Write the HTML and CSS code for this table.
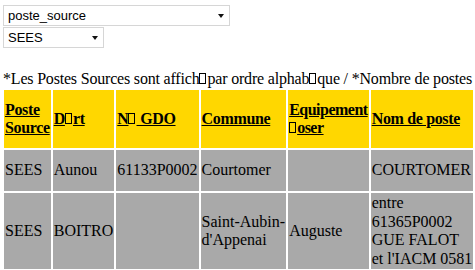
FILE: index.html
```html
<!DOCTYPE html>
<html>
<head>
<meta charset="utf-8">
<link rel="stylesheet" href="styles.css">
</head>
<body>
<div class="filters">
  <span class="sel sel-wide"><select><option>poste_source</option></select><span class="arrow"></span></span>
  <span class="sel sel-small"><select><option>SEES</option></select><span class="arrow"></span></span>
</div>
<p class="note">*Les Postes Sources sont affich<span class="tofu"></span>par ordre alphab<span class="tofu"></span>que / *Nombre de postes : 2</p>
<table class="grid">
  <thead>
    <tr>
      <th><a href="#">Poste Source</a></th>
      <th><a href="#">D<span class="tofu"></span>rt</a></th>
      <th><a href="#">N<span class="tofu"></span> GDO</a></th>
      <th><a href="#">Commune</a></th>
      <th class="tight"><a href="#">Equipement <span class="tofu"></span>oser</a></th>
      <th><a href="#">Nom de poste</a></th>
      <th><a href="#">Nature</a></th>
    </tr>
  </thead>
  <tbody>
    <tr class="r1">
      <td>SEES</td>
      <td>Aunou</td>
      <td>61133P0002</td>
      <td>Courtomer</td>
      <td></td>
      <td>COURTOMER</td>
      <td>Non</td>
    </tr>
    <tr>
      <td>SEES</td>
      <td>BOITRO</td>
      <td></td>
      <td><span class="nw">Saint-Aubin-</span>d'Appenai</td>
      <td>Auguste</td>
      <td>entre 61365P0002 GUE FALOT <span class="nw">et l'IACM 0581</span></td>
      <td>Non</td>
    </tr>
  </tbody>
</table>
</body>
</html>
```

FILE: styles.css
```css
html, body {
  background: #fff;
}
body {
  margin: 5px 0 0 3px;
  font-family: "Liberation Serif", "Times New Roman", serif;
  font-size: 16px;
  color: #000;
}
.filters {
  display: flex;
  flex-direction: column;
  align-items: flex-start;
}
.sel {
  position: relative;
  display: block;
  height: 21px;
}
.sel select {
  appearance: none;
  -webkit-appearance: none;
  display: block;
  height: 21px;
  margin: 0;
  padding: 0 0 0 4px;
  border: 1px solid #d6d6d6;
  border-radius: 0;
  background: #fff;
  font-family: "Liberation Sans", Arial, sans-serif;
  font-size: 13px;
  color: #000;
}
.sel-wide select { width: 227px; }
.sel-small select { width: 101px; }
.sel-small { margin-top: 1px; }
.arrow {
  position: absolute;
  top: 9px;
  right: 6px;
  width: 0;
  height: 0;
  border-left: 3px solid transparent;
  border-right: 3px solid transparent;
  border-top: 4px solid #111;
}
.note {
  margin: 22px 0 0 0;
  white-space: nowrap;
  line-height: 18px;
  letter-spacing: -0.19px;
}
.tofu {
  display: inline-block;
  width: 7px;
  height: 11px;
  border: 1px solid currentColor;
  box-sizing: border-box;
  margin: 0 1px 0 0;
  vertical-align: baseline;
}
.nw {
  white-space: nowrap;
}
.grid {
  width: 1px;
  border-collapse: separate;
  border-spacing: 2px;
  margin-left: -1px;
}
.grid th, .grid td {
  padding: 1px;
  vertical-align: middle;
  text-align: left;
  line-height: 18.5px;
}
.grid th {
  background: #ffd700;
  height: 56px;
  font-weight: bold;
  letter-spacing: -0.35px;
}
.grid th.tight {
  letter-spacing: -0.5px;
}
.grid th a {
  color: #000;
  text-decoration: underline;
}
.grid td {
  background: #a9a9a9;
}
.grid .r1 td {
  height: 39px;
}
```
